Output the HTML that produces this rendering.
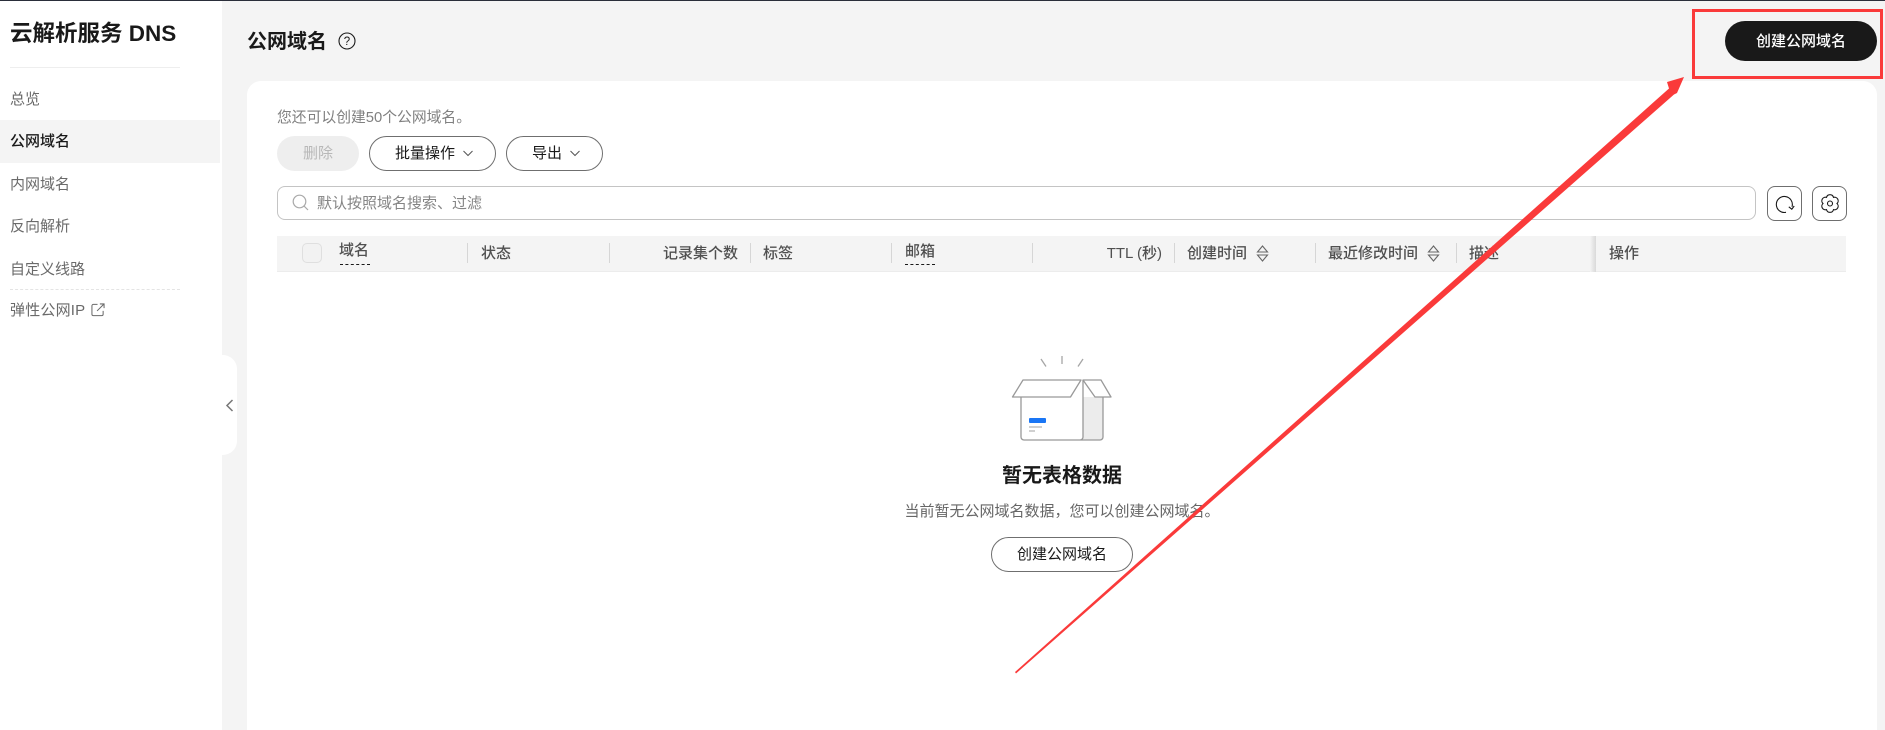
<!DOCTYPE html>
<html lang="zh">
<head>
<meta charset="utf-8">
<title>公网域名</title>
<style>
html,body{margin:0;padding:0;width:1885px;height:730px;overflow:hidden}
body{background:#f4f4f4;font-family:"Liberation Sans","Noto Sans CJK SC",sans-serif;color:#191919;font-size:15px}
#w{position:relative;width:1885px;height:730px;overflow:hidden;background:#f4f4f4}
.a{position:absolute}
.t{position:absolute;white-space:nowrap;line-height:20px;height:20px}
.g{color:#6a6a6a}
.h{color:#505050;font-weight:500}
.v{position:absolute;top:243px;width:1px;height:20px;background:#d6d6d6}
.btn{position:absolute;box-sizing:border-box;border:1px solid #6f6f6f;border-radius:18px;background:#fff;text-align:center;white-space:nowrap}
svg{position:absolute;overflow:visible}
</style>
</head>
<body>
<div id="w">
<div class="a" style="left:0;top:0;width:1885px;height:1px;background:#2a2e3a"></div>

<!-- sidebar -->
<div class="a" style="left:0;top:1px;width:222px;height:729px;background:#fff"></div>
<div class="t" style="left:10px;top:21px;height:26px;line-height:26px;font-size:22.500px;font-weight:700">云解析服务 DNS</div>
<div class="a" style="left:10px;top:67px;width:170px;height:1px;background:#eeeeee"></div>
<div class="a" style="left:0;top:120px;width:220px;height:43px;background:#f4f4f4"></div>
<div class="t g" style="left:10px;top:90px">总览</div>
<div class="t" style="left:10px;top:132px;font-weight:500">公网域名</div>
<div class="t g" style="left:10px;top:175px">内网域名</div>
<div class="t g" style="left:10px;top:217px">反向解析</div>
<div class="t g" style="left:10px;top:260px">自定义线路</div>
<div class="a" style="left:10px;top:289px;width:170px;height:0;border-top:1px dashed #e4e4e4"></div>
<div class="t g" style="left:10px;top:301px;letter-spacing:.2px">弹性公网IP</div>
<svg style="left:91px;top:303px" width="14" height="14" viewBox="0 0 15 15" fill="none" stroke="#6a6a6a" stroke-width="1.100"><path d="M7 1.500H2.500a1.500 1.500 0 0 0-1.500 1.500v9a1.500 1.500 0 0 0 1.500 1.500h9a1.500 1.500 0 0 0 1.500-1.500V8.500"/><path d="M6.500 8.500L13.500 1.500M9.500 1h4.500v4.500"/></svg>

<!-- collapse tab -->
<div class="a" style="left:222px;top:355px;width:15px;height:100px;background:#fff;border-radius:0 14px 14px 0"></div>
<svg style="left:225px;top:399px" width="9" height="13" viewBox="0 0 9 13" fill="none" stroke="#777" stroke-width="1.500"><path d="M7.500 1L2 6.500L7.500 12"/></svg>

<!-- header -->
<div class="t" style="left:247px;top:29px;height:24px;line-height:26px;font-size:20px;font-weight:700">公网域名</div>
<svg style="left:338px;top:32px" width="18" height="18" viewBox="0 0 18 18" fill="none"><circle cx="9" cy="9" r="8" stroke="#191919" stroke-width="1.100"/><text x="9" y="13" text-anchor="middle" font-size="11.500" font-family="Liberation Sans" fill="#191919">?</text></svg>

<!-- card -->
<div class="a" style="left:247px;top:81px;width:1630px;height:649px;background:#fff;border-radius:14px 14px 0 0"></div>

<div class="t" style="left:277px;top:108px;color:#808080;font-size:14.800px">您还可以创建50个公网域名。</div>

<!-- toolbar -->
<div class="a" style="left:277px;top:136px;width:82px;height:35px;border-radius:18px;background:#eeeeee;color:#b8b8b8;text-align:center;line-height:36px">删除</div>
<div class="btn" style="left:369px;top:136px;width:127px;height:35px;line-height:34px"><span style="position:absolute;left:25px">批量操作</span><svg style="left:93px;top:13px" width="10" height="7" viewBox="0 0 10 7" fill="none" stroke="#555" stroke-width="1"><path d="M.5 1L5 5.500L9.500 1"/></svg></div>
<div class="btn" style="left:506px;top:136px;width:97px;height:35px;line-height:34px"><span style="position:absolute;left:25px">导出</span><svg style="left:63px;top:13px" width="10" height="7" viewBox="0 0 10 7" fill="none" stroke="#555" stroke-width="1"><path d="M.5 1L5 5.500L9.500 1"/></svg></div>

<!-- search -->
<div class="a" style="left:277px;top:186px;width:1479px;height:34px;box-sizing:border-box;border:1px solid #c4c4c4;border-radius:8px;background:#fff"></div>
<svg style="left:292px;top:194px" width="18" height="18" viewBox="0 0 18 18" fill="none" stroke="#a9a9a9" stroke-width="1.200"><circle cx="7.500" cy="7.500" r="6.300"/><path d="M12 12l4 4"/></svg>
<div class="t" style="left:317px;top:194px;color:#858585">默认按照域名搜索、过滤</div>

<div class="a" style="left:1767px;top:186px;width:35px;height:35px;box-sizing:border-box;border:1px solid #6f6f6f;border-radius:8px"></div>
<svg style="left:1775px;top:194px" width="19" height="19" viewBox="0 0 19 19" fill="none" stroke="#191919" stroke-width="1.100"><path d="M11 18.300A8 8 0 1 1 17 12.800"/><path d="M13.800 12.800L16.800 15.200L19.200 12"/></svg>
<div class="a" style="left:1812px;top:186px;width:35px;height:35px;box-sizing:border-box;border:1px solid #6f6f6f;border-radius:8px"></div>
<svg style="left:1821px;top:194px" width="18" height="19" viewBox="0 0 18 19" fill="none" stroke="#191919" stroke-width="1.100"><path d="M5.500 3.400A3.600 3.600 0 0 1 12.500 3.400A3.600 3.600 0 0 1 16 9.500A3.600 3.600 0 0 1 12.500 15.600A3.600 3.600 0 0 1 5.500 15.600A3.600 3.600 0 0 1 2 9.500A3.600 3.600 0 0 1 5.500 3.400Z"/><circle cx="9" cy="9.500" r="2.500"/></svg>

<!-- table header -->
<div class="a" style="left:277px;top:236px;width:1569px;height:36px;background:#f4f4f4;border-bottom:1px solid #ececec;box-sizing:border-box"></div>
<div class="a" style="left:302px;top:243px;width:20px;height:20px;box-sizing:border-box;border:1px solid #dfdfdf;border-radius:5px;background:#f2f2f2"></div>
<div class="t h" style="left:339px;top:241px">域名</div>
<div class="a" style="left:340px;top:264px;width:30px;border-top:1px dashed #191919"></div>
<div class="v" style="left:467px"></div>
<div class="t h" style="left:481px;top:244px">状态</div>
<div class="v" style="left:609px"></div>
<div class="t h" style="left:663px;top:244px">记录集个数</div>
<div class="v" style="left:750px"></div>
<div class="t h" style="left:763px;top:244px">标签</div>
<div class="v" style="left:891px"></div>
<div class="t h" style="left:905px;top:242px">邮箱</div>
<div class="a" style="left:905px;top:264px;width:30px;border-top:1px dashed #191919"></div>
<div class="v" style="left:1032px"></div>
<div class="t h" style="right:723px;top:244px">TTL (秒)</div>
<div class="v" style="left:1174px"></div>
<div class="t h" style="left:1187px;top:244px">创建时间</div>
<svg style="left:1256px;top:244px" width="13" height="19" viewBox="0 0 13 19" fill="none" stroke="#666" stroke-width="1.100"><path d="M1.500 8L6.500 2l5 6zM1.500 11L6.500 17l5-6z"/></svg>
<div class="v" style="left:1315px"></div>
<div class="t h" style="left:1328px;top:244px">最近修改时间</div>
<svg style="left:1427px;top:244px" width="13" height="19" viewBox="0 0 13 19" fill="none" stroke="#666" stroke-width="1.100"><path d="M1.500 8L6.500 2l5 6zM1.500 11L6.500 17l5-6z"/></svg>
<div class="v" style="left:1456px"></div>
<div class="t h" style="left:1469px;top:244px">描述</div>
<div class="a" style="left:1590px;top:236px;width:6px;height:36px;background:linear-gradient(to right,#f4f4f4,#d9d9d9)"></div>
<div class="t h" style="left:1609px;top:244px">操作</div>

<!-- empty box -->
<svg style="left:0;top:0" width="1885" height="730" viewBox="0 0 1885 730" fill="none">
<g stroke="#a6a6a6" stroke-width="1.300">
<path d="M1062 356v8M1041 359l5 7.500M1083 359l-5 7.500"/>
</g>
<path d="M1083 397h20v40a3 3 0 0 1-3 3h-17z" fill="#ececec"/>
<path d="M1021 397v40a3 3 0 0 0 3 3h56a3 3 0 0 0 3-3V380M1103 397v40a3 3 0 0 1-3 3h-20" stroke="#999" stroke-width="1.300"/>
<path d="M1023 380h58l-10.500 17H1012.500zM1083 380h18l10 17h-16z" fill="#fff" stroke="#999" stroke-width="1.300" stroke-linejoin="round"/>
<rect x="1029" y="418" width="17" height="5" rx="1" fill="#1a76f5"/>
<path d="M1029 427h13M1029 431h6" stroke="#a0a0a0" stroke-width="1"/>
</svg>

<div class="t" style="left:942px;width:240px;text-align:center;top:464px;height:24px;line-height:24px;font-size:20px;font-weight:700">暂无表格数据</div>
<div class="t" style="left:862px;width:400px;text-align:center;top:501.500px;color:#666">当前暂无公网域名数据，您可以创建公网域名。</div>
<div class="btn" style="left:991px;top:537px;width:142px;height:35px;line-height:33px">创建公网域名</div>

<!-- primary -->
<div class="a" style="left:1725px;top:21px;width:152px;height:40px;background:#191919;border-radius:20px;color:#fff;text-align:center;line-height:41px;font-weight:500">创建公网域名</div>

<!-- annotations -->
<div class="a" style="left:1692px;top:9px;width:191px;height:70px;box-sizing:border-box;border:3px solid #fa3a3a"></div>
<svg style="left:0;top:0" width="1885" height="730" viewBox="0 0 1885 730">
<polygon points="1015,672 1669,88.500 1667,82 1684,77 1677,93 1674,94.500 1016,673.500" fill="#fa3a3a"/>
</svg>
</div>
</body>
</html>
